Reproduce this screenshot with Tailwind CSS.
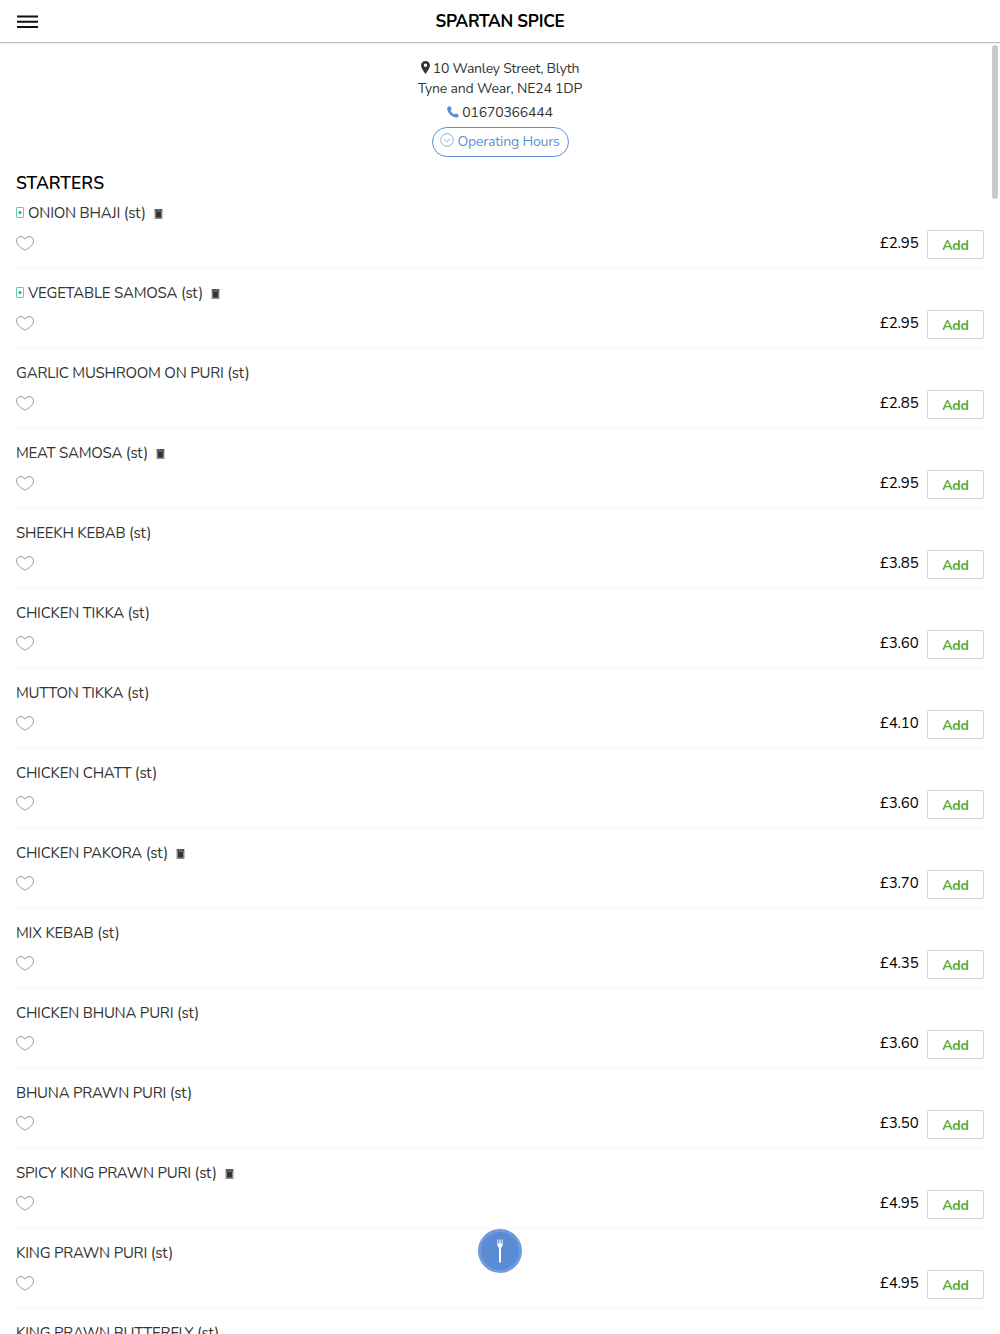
<!DOCTYPE html>
<html lang="en">
<head>
    <meta charset="UTF-8">
    <meta name="viewport" content="width=device-width, initial-scale=1.0">
    <title>Spartan Spice</title>
    <script src="https://cdn.jsdelivr.net/npm/@tailwindcss/browser@4"></script>
</head>
<body class="relative h-screen overflow-hidden bg-white font-[Nunito,Lato,sans-serif] text-[#333]">
    <header class="relative flex h-[43px] items-center justify-center border-b border-[#bcbcbc] shadow-[0_1px_0_#eeeeee]">
        <button class="absolute left-[17px] top-[15px]" aria-label="Menu">
            <svg class="block" width="21" height="14" viewBox="0 0 21 14" stroke="#111" stroke-width="2">
                <path d="M0 1.5h21M0 6.7h21M0 12h21"/>
            </svg>
        </button>
        <h1 class="pt-[2px] text-[17px] font-bold leading-5 tracking-[-0.23px] text-black">SPARTAN SPICE</h1>
    </header>

    <section class="flex flex-col items-center pt-4 text-[14px] leading-5 tracking-[-0.17px]">
        <div class="flex h-5 items-center">
            <svg class="mr-[3px] -mt-[3px]" width="9" height="13" viewBox="0 0 9 13" fill="#333">
                <path fill-rule="evenodd" d="M4.5 0C2 0 0 2 0 4.4 0 7 4.5 13 4.5 13S9 7 9 4.4C9 2 7 0 4.5 0zm0 2.6a1.7 1.7 0 1 1 0 3.4 1.7 1.7 0 0 1 0-3.4z"/>
            </svg>
            <span class="tracking-[-0.22px]">10 Wanley Street, Blyth</span>
        </div>
        <div class="h-5">Tyne and Wear, NE24 1DP</div>
        <div class="mt-1 flex h-5 items-center">
            <svg class="mr-[3px] -mt-[3px]" width="12" height="12" viewBox="0 0 12 12" fill="#5a8fd8">
                <path d="M2.4.3 3.4.2 4.8 3.2 3.5 4.5C4.3 6.3 5.7 7.7 7.5 8.5L8.8 7.2 11.8 8.9C11.9 10.4 10.8 11.6 9.3 11.6 4.5 11.2.6 7.2.2 2.6.2 1.3 1.1.4 2.4.3z"/>
            </svg>
            <span>01670366444</span>
        </div>
        <button class="mt-[4px] flex h-[29.5px] w-[137px] items-center justify-center rounded-full border border-[#5a8fd8] text-[#5a8fd8]">
            <svg class="mr-[3px] -mt-[3px]" width="14" height="14" viewBox="0 0 14 14" fill="none" stroke="#7fa8e0" stroke-width=".9">
                <circle cx="7" cy="7" r="6.3"/>
                <path d="M3.7 5.5 7 8.7 10.3 5.5"/>
            </svg>
            <span>Operating Hours</span>
        </button>
    </section>

    <main class="px-4 pt-[15.5px]">
        <h2 class="h-[22px] text-[17.5px] font-semibold leading-[22px] text-black">STARTERS</h2>
        <ul id="menu"></ul>
    </main>

    <div class="absolute right-[2px] top-[45px] h-[154px] w-[6px] rounded-full bg-[#c9c9c9]"></div>

    <button class="absolute left-[478px] top-[1229px] flex size-11 items-center justify-center rounded-full border-[3px] border-[#6f9cdc] bg-[#5a8cd4]" aria-label="Menu sections">
        <svg width="6" height="24" viewBox="0 0 6 24" fill="#fff">
            <path d="M.3.5h.9v4h.8v-4h.6v4h.8v-4H4v4h.8v-4h.9v5c0 1.6-.7 2.4-1.5 2.9L4 9.5v13c0 .8-.4 1.2-1 1.2s-1-.4-1-1.2v-13l-.2-1.1C1 7.9.3 7.1.3 5.5z"/>
        </svg>
    </button>

    <script>
        // veg: vegetarian mark, box: container icon
        const items = [
            { name: 'ONION BHAJI (st)', price: '2.95', veg: true, box: true },
            { name: 'VEGETABLE SAMOSA (st)', price: '2.95', veg: true, box: true },
            { name: 'GARLIC MUSHROOM ON PURI (st)', price: '2.85' },
            { name: 'MEAT SAMOSA (st)', price: '2.95', box: true },
            { name: 'SHEEKH KEBAB (st)', price: '3.85' },
            { name: 'CHICKEN TIKKA (st)', price: '3.60' },
            { name: 'MUTTON TIKKA (st)', price: '4.10' },
            { name: 'CHICKEN CHATT (st)', price: '3.60' },
            { name: 'CHICKEN PAKORA (st)', price: '3.70', box: true },
            { name: 'MIX KEBAB (st)', price: '4.35' },
            { name: 'CHICKEN BHUNA PURI (st)', price: '3.60' },
            { name: 'BHUNA PRAWN PURI (st)', price: '3.50' },
            { name: 'SPICY KING PRAWN PURI (st)', price: '4.95', box: true },
            { name: 'KING PRAWN PURI (st)', price: '4.95' },
            { name: 'KING PRAWN BUTTERFLY (st)' },
        ];

        const vegIcon = `
            <svg class="mr-1" width="8" height="11" viewBox="0 0 8 11">
                <rect x=".5" y=".5" width="7" height="10" rx=".5" fill="none" stroke="#5fd0a0"/>
                <circle cx="4" cy="5.5" r="1.5" fill="#1faf70"/>
            </svg>`;
        const boxIcon = `
            <svg class="ml-2 mt-[2px]" width="9" height="10" viewBox="0 0 9 10">
                <path fill="#8c8c8c" d="M.5 0h8v10h-8z"/>
                <path fill="#333" d="M1.5 0h1.5v1H1.5zM4 0h1.2v1H4zM6.3 0h1.5v1H6.3zM1 1.6h7v.8H1zM2 3h5v5.5H2z"/>
            </svg>`;

        const actions = item => `
            <div class="flex h-[30px] items-start">
                <svg class="mt-[6px]" width="18" height="15" viewBox="0 0 18 15" fill="none" stroke="#8a8a8a" stroke-width=".9">
                    <path d="M9 14.3C5 12.2.5 8.8.5 4.8.5 2.4 2.3.6 4.6.6 6.4.6 8 1.6 9 3.2 10 1.6 11.6.6 13.4.6c2.3 0 4.1 1.8 4.1 4.2 0 4-4.5 7.4-8.5 9.5z"/>
                </svg>
                <span class="ml-auto mt-[3px] text-[15px] leading-5 tracking-[-0.15px] text-black">£${item.price}</span>
                <button class="ml-[8.5px] h-[29px] w-[57px] rounded-[2px] border border-[#d3d3d3] pt-[2px] text-[14px] font-bold tracking-[-0.2px] text-[#55ab3a]">Add</button>
            </div>`;

        document.getElementById('menu').innerHTML = items.map(item => `
            <li class="h-[80.04px] border-b border-[#f4f4f4] pt-[9px] first:h-[74.5px] first:pt-[3.5px]">
                <div class="flex h-[32px] items-start">
                    <div class="flex h-[30px] items-center text-[15px] leading-5 tracking-[-0.22px]">
                        ${item.veg ? vegIcon : ''}
                        <span>${item.name}</span>
                        ${item.box ? boxIcon : ''}
                    </div>
                </div>
                ${item.price ? actions(item) : ''}
            </li>`).join('');
    </script>
</body>
</html>
